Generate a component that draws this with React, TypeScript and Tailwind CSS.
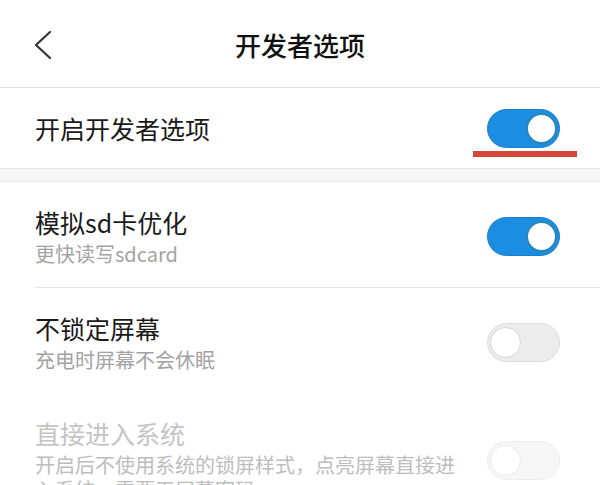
import React from "react"

type ToggleState = "on" | "off" | "disabled"

function Toggle({ state }: { state: ToggleState }) {
  if (state === "on") {
    return (
      <div className="relative h-[39px] w-[73px] shrink-0 rounded-full border border-[#1b7fc6] bg-[#1b8de3]">
        <div className="absolute right-[2px] top-[3px] h-[31px] w-[31px] rounded-full border-[2px] border-[#2a86b8] bg-white" />
      </div>
    )
  }
  const disabled = state === "disabled"
  return (
    <div
      className={
        disabled
          ? "relative h-[39px] w-[73px] shrink-0 rounded-full border border-[#efefef] bg-[#f6f6f6]"
          : "relative h-[39px] w-[73px] shrink-0 rounded-full border border-[#dcdcdc] bg-[#ececec]"
      }
    >
      <div
        className={
          disabled
            ? "absolute left-[2px] top-[3px] h-[31px] w-[31px] rounded-full border border-[#ebebeb] bg-white"
            : "absolute left-[2px] top-[3px] h-[31px] w-[31px] rounded-full border border-[#d6d6d6] bg-white"
        }
      />
    </div>
  )
}

function SettingRow({
  title,
  sub,
  state,
  disabled,
  divider,
}: {
  title: string
  sub: string
  state: ToggleState
  disabled?: boolean
  divider?: boolean
}) {
  return (
    <div className="pl-[35px]">
      <div className={divider ? "flex items-center border-b border-[#e6e6e6] pb-[21px] pr-[40px] pt-[25px]" : "flex items-center pb-[21px] pr-[40px] pt-[25px]"}>
        <div className="w-[430px]">
          <div className={disabled ? "text-[25px] leading-[30px] text-[#c4c4c4]" : "text-[25px] leading-[30px] text-[#1a1a1a]"}>
            {title}
          </div>
          <div className={disabled ? "mt-[4px] text-[20px] leading-[25px] text-[#bdbdbd]" : "mt-[4px] text-[20px] leading-[25px] text-[#a3a3a3]"}>
            {sub}
          </div>
        </div>
        <div className="ml-auto">
          <Toggle state={state} />
        </div>
      </div>
    </div>
  )
}

export default function App() {
  return (
    <div
      className="h-[485px] w-[600px] overflow-hidden bg-white"
      style={{ fontFamily: '"Noto Sans CJK SC", "Noto Sans", sans-serif' }}
    >
      {/* Header */}
      <header className="relative flex h-[88px] items-center justify-center border-b border-[#dedede] pt-[3px]">
        <svg className="absolute left-[33px] top-[30px]" width="20" height="30" viewBox="0 0 20 30" fill="none">
          <path d="M17 2 L3 15 L17 28" stroke="#333" strokeWidth="2.2" strokeLinecap="round" strokeLinejoin="round" />
        </svg>
        <h1 className="text-[26px] font-medium leading-[34px] text-[#111]">开发者选项</h1>
      </header>

      {/* Master switch */}
      <div className="relative flex h-[80px] items-center pl-[35px] pr-[40px]">
        <span className="text-[25px] leading-[30px] text-[#1a1a1a]">开启开发者选项</span>
        <div className="ml-auto">
          <Toggle state="on" />
        </div>
        <div className="absolute left-[473px] top-[63px] h-[6px] w-[104px] bg-[#d3473d]" />
      </div>

      <div className="h-[14px] border-y border-[#e6e6e6] bg-[#f6f6f6]" />

      <SettingRow title="模拟sd卡优化" sub="更快读写sdcard" state="on" divider />
      <SettingRow title="不锁定屏幕" sub="充电时屏幕不会休眠" state="off" />
      <SettingRow
        title="直接进入系统"
        sub="开启后不使用系统的锁屏样式，点亮屏幕直接进入系统，需要无屏幕密码"
        state="disabled"
        disabled
      />
    </div>
  )
}
